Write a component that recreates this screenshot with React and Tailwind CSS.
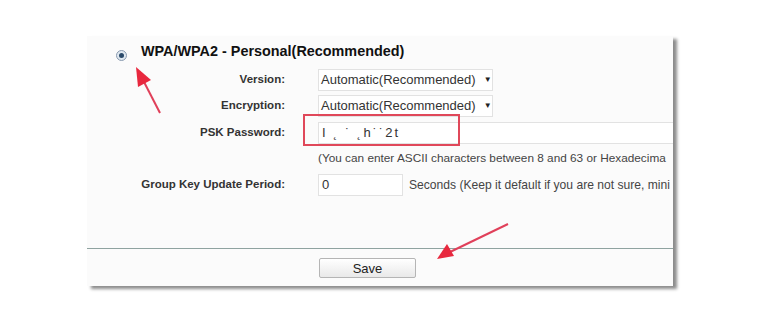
import React from "react";

function Row({ label, children, className = "" }) {
  return (
    <div className={"flex items-center " + className}>
      <div className="w-[198px] shrink-0 text-right font-bold text-[11.5px] text-[#333]">{label}</div>
      <div className="ml-[33px] flex items-center min-w-0">{children}</div>
    </div>
  );
}

function Select({ value }) {
  return (
    <div className="w-[175px] h-[22px] shrink-0 border border-[#e2e2e2] bg-white flex items-center pl-[2px] text-[13px] text-[#333]">
      <span>{value}</span>
      <span className="ml-[8px] text-[8px] leading-none text-[#222]">▼</span>
    </div>
  );
}

export default function App() {
  return (
    <div className="relative w-[770px] h-[330px] bg-white overflow-hidden font-['Liberation_Sans',Arial,sans-serif]">
      <div className="ml-[87px] mt-[36px] w-[586px] h-[250px] bg-[#fbfbfb] shadow-[4px_3px_3px_rgba(0,0,0,0.45)] overflow-hidden flex flex-col">
        <div className="flex items-center h-[30px] pt-[2px]">
          <span className="ml-[29px] mt-[6px] w-[11px] h-[11px] rounded-full border border-[#8a9bb0] bg-[#dfe8f0] flex items-center justify-center">
            <span className="w-[5px] h-[5px] rounded-full bg-[#2b4a6a]" />
          </span>
          <span className="ml-[14px] font-bold text-[14.4px] text-[#111]">WPA/WPA2 - Personal(Recommended)</span>
        </div>
        <Row label="Version:" className="h-[26px] mt-[1px]">
          <Select value="Automatic(Recommended)" />
        </Row>
        <Row label="Encryption:" className="h-[26px]">
          <Select value="Automatic(Recommended)" />
        </Row>
        <Row label="PSK Password:" className="h-[27px]">
          <div className="w-[360px] h-[22px] shrink-0 border border-[#e2e2e2] bg-white flex items-center pl-[3px] text-[13px] text-[#333] tracking-[2px]">
            I ˛ ˙ ˛h˙˙2t
          </div>
        </Row>
        <Row label="" className="h-[26px]">
          <span className="whitespace-nowrap text-[11.8px] text-[#444]">
            (You can enter ASCII characters between 8 and 63 or Hexadecima
          </span>
        </Row>
        <Row label="Group Key Update Period:" className="h-[26px]">
          <div className="w-[85px] h-[22px] shrink-0 border border-[#e2e2e2] bg-white flex items-center pl-[3px] text-[13px] text-[#333]">0</div>
          <span className="ml-[6px] whitespace-nowrap text-[12.1px] text-[#444]">
            Seconds (Keep it default if you are not sure, mini
          </span>
        </Row>
        <div className="mt-[50px] h-px bg-[#8fa3a0]" />
        <div className="flex">
          <button className="ml-[232px] mt-[9px] w-[97px] h-[20px] border border-[#b5b5b5] rounded-[2px] bg-gradient-to-b from-[#ffffff] to-[#e9e9e9] text-[13px] text-[#222] leading-none">
            Save
          </button>
        </div>
      </div>

      <div className="absolute left-[303px] top-[114px] w-[157px] h-[32px] border-2 border-[#e0485a]" />

      <svg className="absolute left-0 top-0" width="770" height="330">
        <line x1="160" y1="113" x2="143" y2="80" stroke="#e0405a" strokeWidth="2" />
        <polygon points="136,67 151,80 138,87" fill="#e8283e" />
        <line x1="508" y1="224" x2="450" y2="252" stroke="#e0405a" strokeWidth="2" />
        <polygon points="437,259 447,244 454,256" fill="#e8283e" />
      </svg>
    </div>
  );
}
